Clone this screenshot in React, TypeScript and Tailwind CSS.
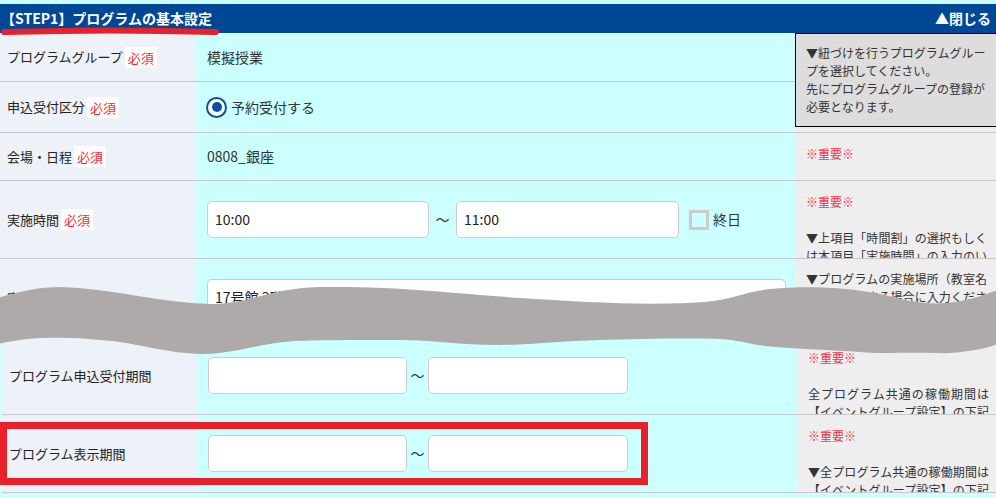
import React from "react";

const FONT = "font-['Meiryo','Noto_Sans_CJK_JP','Noto_Sans',sans-serif]";

function Required() {
  return (
    <span className="ml-[2px] inline-block bg-white px-[3px] py-[1px] text-[13px] leading-[19px] text-[#ff1f2f]">
      必須
    </span>
  );
}

function Label({ text, required }: { text: string; required?: boolean }) {
  return (
    <div className="flex w-[196px] shrink-0 items-center bg-[#edf1f8] pl-[7px] text-[13px] text-[#222]">
      <span>{text}</span>
      {required && <Required />}
    </div>
  );
}

function Note({ important, text }: { important?: boolean; text?: string }) {
  return (
    <div className="flex-1 overflow-hidden bg-[#eeeeee]">
      <div className="w-[191px] pl-[10px] pt-[12px] text-justify text-[12px] leading-[18px] text-[#333]">
        {important && <div className="text-[#ff2d3d]">※重要※</div>}
        {important && text && <div className="h-[18px]" />}
        {text && <div>{text}</div>}
      </div>
    </div>
  );
}

function TextBox({ value, className }: { value?: string; className: string }) {
  return (
    <div
      className={`flex items-center rounded-[5px] border border-[#cccccc] bg-white pl-[7px] text-[14px] text-[#222] ${className}`}
    >
      {value}
    </div>
  );
}

export default function App() {
  return (
    <div className={`relative h-[498px] w-[996px] overflow-hidden bg-[#ccffff] pt-[4px] ${FONT}`}>
      {/* header */}
      <div className="flex h-[29px] items-center justify-between bg-[#004896] pl-[1px] pr-[5px] text-[14px] font-bold text-white">
        <span>【STEP1】プログラムの基本設定</span>
        <span>▲閉じる</span>
      </div>

      {/* upper rows */}
      <div className="flex h-[49px] border-b border-[#c8c8c8]">
        <Label text="プログラムグループ" required />
        <div className="flex w-[600px] items-center pl-[11px] text-[14px] text-[#333]">模擬授業</div>
        <div className="relative flex-1 bg-[#eeeeee]">
          <div className="absolute -left-px top-0 z-10 h-[94px] w-[212px] border border-black bg-[#dddddd] pl-[10px] pt-[10px] text-[12px] leading-[18px] text-[#333]">
            <div className="w-[182px]">
              ▼紐づけを行うプログラムグループを選択してください。
              <br />
              先にプログラムグループの登録が必要となります。
            </div>
          </div>
        </div>
      </div>

      <div className="flex h-[51px] border-b border-[#c8c8c8]">
        <Label text="申込受付区分" required />
        <div className="flex w-[600px] items-center pl-[10px] text-[14px] text-[#333]">
          <span className="flex h-[21px] w-[21px] items-center justify-center rounded-full border-[2.5px] border-[#0d4f9c] bg-white">
            <span className="h-[10px] w-[10px] rounded-full bg-[#0d4f9c]" />
          </span>
          <span className="ml-[4px]">予約受付する</span>
        </div>
        <div className="flex-1 bg-[#eeeeee]" />
      </div>

      <div className="flex h-[48px] border-b border-[#c8c8c8]">
        <Label text="会場・日程" required />
        <div className="flex w-[600px] items-center pl-[11px] text-[14px] text-[#333]">0808_銀座</div>
        <Note important />
      </div>

      <div className="flex h-[78px] border-b border-[#c8c8c8]">
        <Label text="実施時間" required />
        <div className="flex w-[600px] items-center pl-[11px] text-[14px] text-[#333]">
          <TextBox value="10:00" className="h-[37px] w-[222px]" />
          <span className="w-[27px] text-center">～</span>
          <TextBox value="11:00" className="h-[37px] w-[223px]" />
          <span className="ml-[10px] h-[20px] w-[20px] border-[3px] border-[#cccccc]" />
          <span className="ml-[4px]">終日</span>
        </div>
        <Note important text="▼上項目「時間割」の選択もしくは本項目「実施時間」の入力のいずれかが必須です。" />
      </div>

      <div className="flex h-[78px]">
        <Label text="実施場所" />
        <div className="w-[600px] pl-[11px] pt-[20px] text-[14px]">
          <TextBox value="17号館 3階 1701教室" className="h-[37px] w-[579px]" />
        </div>
        <div className="flex-1 overflow-hidden bg-[#eeeeee]">
          <div className="w-[191px] pl-[10px] pt-[11px] text-justify text-[12px] leading-[18px] text-[#333]">
            ▼プログラムの実施場所（教室名等）を表示する場合に入力ください。
          </div>
        </div>
      </div>

      {/* lower rows */}
      <div className="ml-[2px] bg-white">
        <div className="flex h-[78px] border-b border-[#c8c8c8]">
          <Label text="プログラム申込受付期間" />
          <div className="flex w-[600px] items-center bg-[#ccffff] pl-[10px] text-[14px] text-[#333]">
            <TextBox className="h-[37px] w-[199px]" />
            <span className="w-[21px] text-center">～</span>
            <TextBox className="h-[37px] w-[200px]" />
          </div>
          <Note important text="全プログラム共通の稼働期間は【イベントグループ設定】の下記項目で設定してください。" />
        </div>
        <div className="flex h-[78px] border-b border-[#c8c8c8]">
          <Label text="プログラム表示期間" />
          <div className="flex w-[600px] items-center bg-[#ccffff] pl-[10px] text-[14px] text-[#333]">
            <TextBox className="h-[37px] w-[199px]" />
            <span className="w-[21px] text-center">～</span>
            <TextBox className="h-[37px] w-[200px]" />
          </div>
          <Note important text="▼全プログラム共通の稼働期間は【イベントグループ設定】の下記項目で設定してください。" />
        </div>
        <div className="h-[20px] bg-[#ccffff]" />
      </div>

      {/* red underline annotation */}
      <svg className="pointer-events-none absolute left-0 top-[27px]" width="222" height="12" viewBox="0 0 222 12">
        <path d="M4 5 C 70 3, 150 3, 216 5" stroke="#e8202a" strokeWidth="6" strokeLinecap="round" fill="none" />
      </svg>

      {/* red box annotation */}
      <div className="pointer-events-none absolute left-0 top-[422px] h-[63px] w-[648px] border-[7px] border-[#e8202a]" />

      {/* omission wave */}
      <svg className="pointer-events-none absolute left-0 top-0" width="996" height="498" viewBox="0 0 996 498">
        <path
          fill="#aeaaa9"
          d="M -2 298 C 20 291, 40 287, 60 287 C 110 288, 160 303, 210 304 C 250 304, 270 288, 320 287 C 400 286, 460 294, 520 298 C 580 302, 650 306, 705 302 C 730 300, 745 292, 770 289 C 810 285, 850 288, 880 294 C 905 300, 925 305, 945 303 C 970 301, 985 294, 998 290 L 998 344 C 985 349, 960 354, 935 353 C 905 352, 880 354, 860 352 C 830 350, 800 349, 775 347 C 750 345, 740 340, 720 339 C 680 338, 640 339, 600 340 C 560 341, 530 345, 500 345 C 460 345, 430 340, 400 340 C 350 340, 320 340, 295 341 C 260 343, 230 355, 200 354 C 170 353, 140 345, 120 342 C 90 338, 60 337, 40 338 C 20 339, 8 342, -2 344 Z"
        />
      </svg>
    </div>
  );
}
